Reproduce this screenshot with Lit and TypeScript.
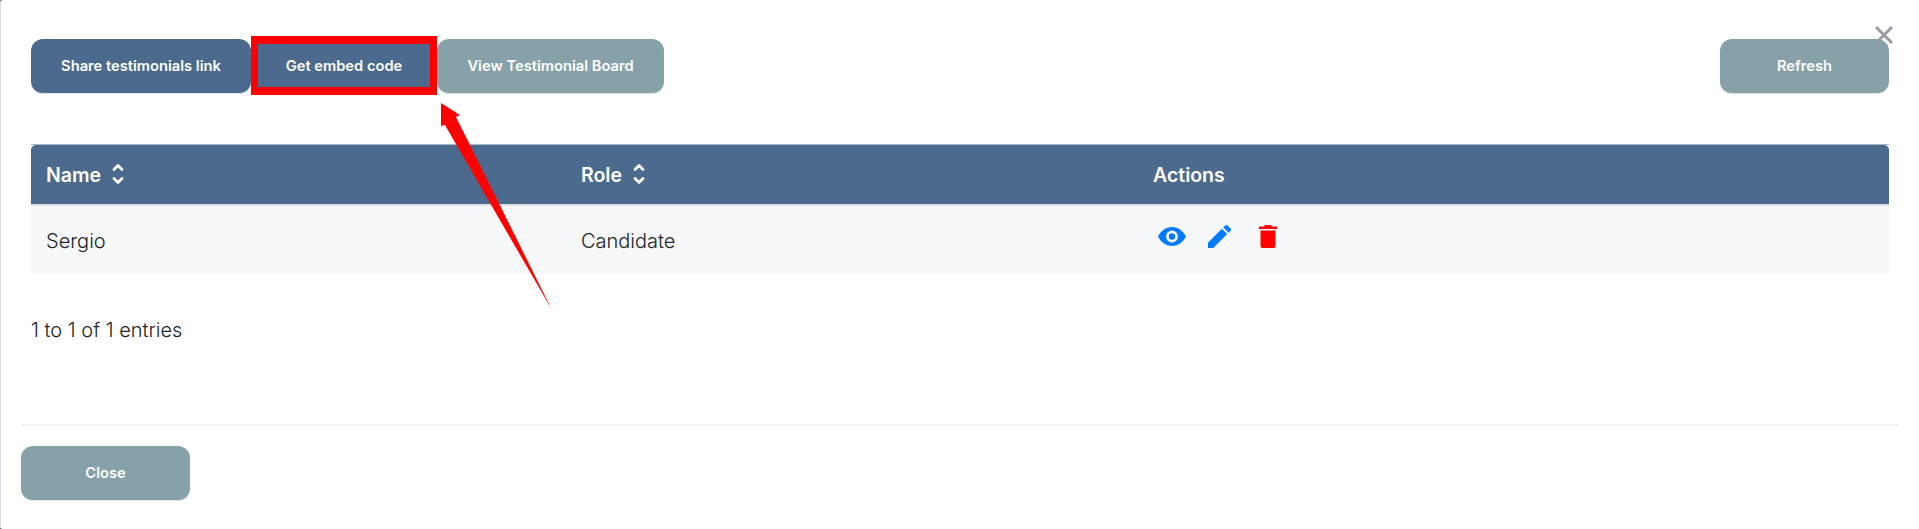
import { LitElement, html, css, svg } from 'lit';
import { customElement } from 'lit/decorators.js';

const sortIcon = svg`<svg class="sort" width="14" height="24" viewBox="0 0 14 24" fill="none" stroke="#fff" stroke-width="2.8" stroke-linecap="round" stroke-linejoin="round"><path d="M3 7.500 7 3.500l4 4"/><path d="M3 16.500 7 20.500l4-4"/></svg>`;

@customElement('app-root')
export class AppRoot extends LitElement {
  static styles = css`
    :host {
      display: block;
      position: relative;
      width: 100%;
      height: 529px;
      overflow: hidden;
      background: #6f6f6f;
      font-family: Inter, "Noto Sans", sans-serif;
      color: #212529;
    }
    .modal {
      box-sizing: border-box;
      height: 529px;
      display: flex;
      flex-direction: column;
      background: #fff;
      border-left: 1px solid #dcdce4;
      border-radius: 3px 0 0 3px;
      padding: 0 20px;
    }
    .body {
      flex: 1;
      padding: 39px 10px 0 10px;
    }
    .toolbar {
      display: flex;
      height: 55px;
    }
    .spacer { flex: 1; }
    button {
      box-sizing: border-box;
      height: 55px;
      border: none;
      border-bottom: 1px solid #dfe5ea;
      border-radius: 12px;
      font-family: inherit;
      font-size: 14.7px;
      font-weight: 600;
      color: #fff;
      padding: 0;
    }
    .blue { background: #4c6a8d; }
    .teal { background: #86a1a7; }
    .share { width: 220px; }
    .embed { width: 186px; border-radius: 0; }
    .board { width: 227px; }
    .refresh, .close-btn { width: 169px; }
    table {
      width: 100%;
      margin-top: 50px;
      border-collapse: collapse;
      table-layout: fixed;
    }
    th {
      height: 60px;
      padding: 2px 15px 0;
      box-sizing: border-box;
      background: #4c6a8d;
      color: #fff;
      font-size: 19.5px;
      font-weight: 600;
      text-align: left;
      border-top: 1px solid #a9b6c5;
      border-bottom: 2px solid #dee2e6;
    }
    th:first-child { border-top-left-radius: 5px; width: 535px; }
    th:nth-child(2) { width: 572px; }
    th:last-child { border-top-right-radius: 5px; }
    .head {
      display: flex;
      align-items: center;
      gap: 10px;
    }
    .sort { margin-top: -2px; }
    td {
      height: 69px;
      padding: 2px 15px 0;
      box-sizing: border-box;
      background: #f7f8fa;
      font-size: 20px;
      font-weight: 300;
    }
    .actions {
      display: flex;
      align-items: center;
      gap: 22px;
      margin-left: 5px;
      margin-top: -9px;
    }
    .info {
      margin-top: 44px;
      font-size: 20px;
      line-height: 24px;
      font-weight: 300;
    }
    .footer {
      height: 105px;
      box-sizing: border-box;
      border-top: 2px solid #f0f1f2;
      padding-top: 20px;
    }
    .x {
      position: absolute;
      top: 26px;
      right: 26px;
    }
    .highlight {
      position: absolute;
      left: 251px;
      top: 36px;
      width: 186px;
      height: 59px;
      box-sizing: border-box;
      border: solid #ff0000;
      border-width: 8px 7px 8px 7px;
    }
    .arrow {
      position: absolute;
      left: 0;
      top: 0;
      pointer-events: none;
    }
  `;

  render() {
    return html`
      <div class="modal">
        <div class="body">
          <div class="toolbar">
            <button class="blue share">Share testimonials link</button>
            <button class="blue embed">Get embed code</button>
            <button class="teal board">View Testimonial Board</button>
            <div class="spacer"></div>
            <button class="teal refresh">Refresh</button>
          </div>
          <table>
            <thead>
              <tr>
                <th><div class="head">Name ${sortIcon}</div></th>
                <th><div class="head">Role ${sortIcon}</div></th>
                <th>Actions</th>
              </tr>
            </thead>
            <tbody>
              <tr>
                <td>Sergio</td>
                <td>Candidate</td>
                <td>
                  <div class="actions">
                    <svg width="28" height="19" viewBox="0 0 28 19"><path fill="#007bff" fill-rule="evenodd" d="M14 0C8 0 3 3.800 0 9.500 3 15.200 8 19 14 19s11-3.800 14-9.500C25 3.800 20 0 14 0Zm0 3.600a5.900 5.900 0 1 1 0 11.800 5.900 5.900 0 0 1 0-11.800Zm0 2.700a3.200 3.200 0 1 0 0 6.400 3.200 3.200 0 0 0 0-6.400Z"/></svg>
                    <svg width="23" height="23" viewBox="0 0 24 24"><path fill="#007bff" d="M0 24v-5.500L14.500 4l5.500 5.500L5.500 24H0ZM16 2.500 18 .600a1.800 1.800 0 0 1 2.500 0l3 3a1.800 1.800 0 0 1 0 2.500L21.500 8 16 2.500Z"/></svg>
                    <svg width="18" height="23" viewBox="0 0 18 23" style="margin-left:6px"><path fill="#ff0000" d="M6 0h6l1 1.500h5V4H0V1.500h5L6 0ZM1.500 5.500h15V21a2 2 0 0 1-2 2h-11a2 2 0 0 1-2-2V5.500Z"/></svg>
                  </div>
                </td>
              </tr>
            </tbody>
          </table>
          <div class="info">1 to 1 of 1 entries</div>
        </div>
        <div class="footer">
          <button class="teal close-btn">Close</button>
        </div>
      </div>
      <svg class="x" width="18" height="18" viewBox="0 0 18 18" stroke="#9a9aa6" stroke-width="3"><path d="M1 1l16 16M17 1 1 17"/></svg>
      <div class="highlight"></div>
      <svg class="arrow" width="600" height="320" viewBox="0 0 600 320"><polygon fill="#ff0000" points="441,103 460,115 456,117 552,310 445,125 441,126"/></svg>
    `;
  }
}
